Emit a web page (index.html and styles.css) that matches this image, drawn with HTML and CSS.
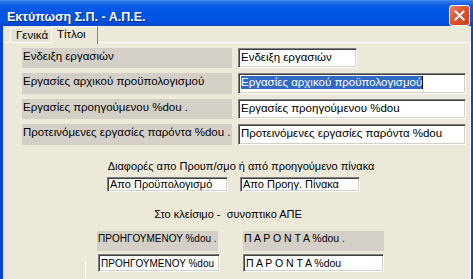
FILE: index.html
```html
<!DOCTYPE html>
<html lang="el">
<head>
<meta charset="utf-8">
<title>Εκτύπωση Σ.Π. - Α.Π.Ε.</title>
<link rel="stylesheet" href="styles.css">
</head>
<body>
<div class="window">
  <div class="titlebar">
    <span class="title">Εκτύπωση Σ.Π. - Α.Π.Ε.</span>
    <span class="close" aria-label="Κλείσιμο">
      <svg width="13" height="13" viewBox="0 0 13 13"><path d="M2.5 2.5 L10.5 10.5 M10.5 2.5 L2.5 10.5" stroke="#fff" stroke-width="2" stroke-linecap="square"/></svg>
    </span>
  </div>
  <div class="frame">
    <div class="tabs">
      <div class="tab">Γενικά</div>
      <div class="tab active">Τίτλοι</div>
    </div>
    <div class="panel">
      <div class="rows">
        <div class="row r20"><div class="label">Ενδειξη εργασιών</div><div class="field short">Ενδειξη εργασιών</div></div>
        <div class="row r21"><div class="label">Εργασίες αρχικού προϋπολογισμού</div><div class="field long"><span class="sel">Εργασίες αρχικού προϋπολογισμού</span><span class="caret"></span></div></div>
        <div class="row r20"><div class="label">Εργασίες προηγούμενου %dou .</div><div class="field long">Εργασίες προηγούμενου %dou</div></div>
        <div class="row r21"><div class="label">Προτεινόμενες εργασίες παρόντα %dou .</div><div class="field long">Προτεινόμενες εργασίες παρόντα %dou</div></div>
      </div>
      <div class="caption cap1">Διαφορές απο Προυπ/σμο ή από προηγούμενο πίνακα</div>
      <div class="pair">
        <div class="field small w121">Απο Προϋπολογισμό</div>
        <div class="field small w120">Απο Προηγ. Πίνακα</div>
      </div>
      <div class="caption cap2">Στο κλείσιμο -  συνοπτικο ΑΠΕ</div>
      <div class="glabels">
        <div class="label g1 c10">ΠΡΟΗΓΟΥΜΕΝΟΥ %dou .</div>
        <div class="label g2 c105">Π Α Ρ Ο Ν Τ Α %dou .</div>
      </div>
      <div class="gfields">
        <div class="edge"></div>
        <div class="field mid f1 c10">ΠΡΟΗΓΟΥΜΕΝΟΥ %dou</div>
        <div class="field mid f2 c105">Π Α Ρ Ο Ν Τ Α %dou</div>
      </div>
    </div>
  </div>
</div>
</body>
</html>
```

FILE: styles.css
```css
* { box-sizing: border-box; }
html, body { margin: 0; padding: 0; }
body {
  width: 473px;
  height: 279px;
  overflow: hidden;
  background: #ECE9D8;
  font-family: "Liberation Sans", Arial, sans-serif;
  font-size: 11px;
  color: #000;
}
.window {
  display: flex;
  flex-direction: column;
  width: 473px;
  height: 279px;
}
.titlebar {
  height: 27px;
  display: flex;
  align-items: flex-start;
  justify-content: space-between;
  background: linear-gradient(to bottom, #3F8CF3 0px, #2A73EC 2px, #0E5CE6 5px, #0055E5 12px, #0054E3 20px, #0048D0 25px, #003EB8 27px);
  padding: 0 3px 0 7px;
}
.title {
  margin-top: 10px;
  line-height: 15px;
  font-weight: bold;
  font-size: 12.5px;
  color: #fff;
  text-shadow: 1px 1px 0 #0A2A7A;
  white-space: nowrap;
}
.close {
  margin-top: 5px;
  width: 21px;
  height: 21px;
  border: 1px solid #fff;
  border-radius: 3px;
  background: linear-gradient(to bottom right, #E88A6C 0%, #E0582F 40%, #C9401C 100%);
  display: flex;
  align-items: center;
  justify-content: center;
}
.frame {
  flex: 1;
  display: flex;
  flex-direction: column;
  border-left: 3px solid #0646D4;
  border-right: 2px solid #0646D4;
  background: #ECE9D8;
}
.tabs {
  height: 16px;
  display: flex;
  align-items: flex-start;
  padding-left: 7px;
  position: relative;
  z-index: 1;
}
.tab {
  height: 14px;
  margin-top: 2px;
  line-height: 13px;
  padding: 0 0 0 5px;
  width: 41px;
  border-left: 1px solid #fff;
  border-top: 1px solid #fff;
  background: #E6E3D3;
  white-space: nowrap;
  font-size: 11.5px;
}
.tab.active {
  height: 18px;
  margin-top: 0;
  width: 47px;
  padding-top: 1px;
  border-right: 1px solid #808080;
  background: #ECE9D8;
}
.panel {
  flex: 1;
  border-top: 1px solid #fff;
  border-right: 1px solid #fff;
  padding: 5px 0 0 19px;
  display: flex;
  flex-direction: column;
}
.rows {
  display: flex;
  flex-direction: column;
  gap: 5px;
  font-size: 11.5px;
}
.row {
  display: flex;
  gap: 6px;
}
.r20 { height: 20px; }
.r21 { height: 21px; }
.label {
  width: 210px;
  background: #D4D0C8;
  padding: 2px 0 0 1px;
  line-height: 13px;
  white-space: nowrap;
  overflow: hidden;
}
.field {
  background: #fff;
  border: 1px solid;
  border-color: #808080 #fff #fff #808080;
  box-shadow: inset 1px 1px 0 #404040, inset -1px -1px 0 #D4D0C8;
  padding: 2px 0 0 2px;
  line-height: 13px;
  white-space: nowrap;
  overflow: hidden;
  display: flex;
  align-items: flex-start;
}
.field.short { width: 119px; }
.field.long { width: 228px; }
.sel {
  background: #316AC5;
  color: #fff;
}
.caret {
  width: 1px;
  height: 13px;
  background: #000;
}
.caption {
  line-height: 13px;
  text-align: center;
  white-space: pre;
}
.cap1 { margin-top: 15px; margin-right: 10px; }
.cap2 { margin-top: 16px; margin-right: 36px; }
.pair {
  margin-top: 4px;
  display: flex;
  gap: 12px;
  padding-left: 85px;
}
.field.small {
  height: 15px;
  padding-top: 1px;
  line-height: 11px;
}
.w121 { width: 121px; }
.w120 { width: 120px; }
.glabels {
  margin-top: 10px;
  display: flex;
  gap: 25px;
  padding-left: 75px;
}
.glabels .label {
  height: 20px;
  padding-top: 1px;
}
.g1 { width: 121px; }
.g2 { width: 141px; }
.c10 { font-size: 10px; }
.c105 { font-size: 10.5px; }
.gfields {
  margin-top: 3px;
  display: flex;
  align-items: flex-start;
  padding-left: 63px;
}
.edge {
  width: 1px;
  height: 20px;
  margin-top: 8px;
  margin-right: 12px;
  background: #fff;
}
.field.mid {
  height: 18px;
  padding-top: 2px;
}
.f1 { width: 122px; margin-right: 23px; }
.f2 { width: 141px; }
```
